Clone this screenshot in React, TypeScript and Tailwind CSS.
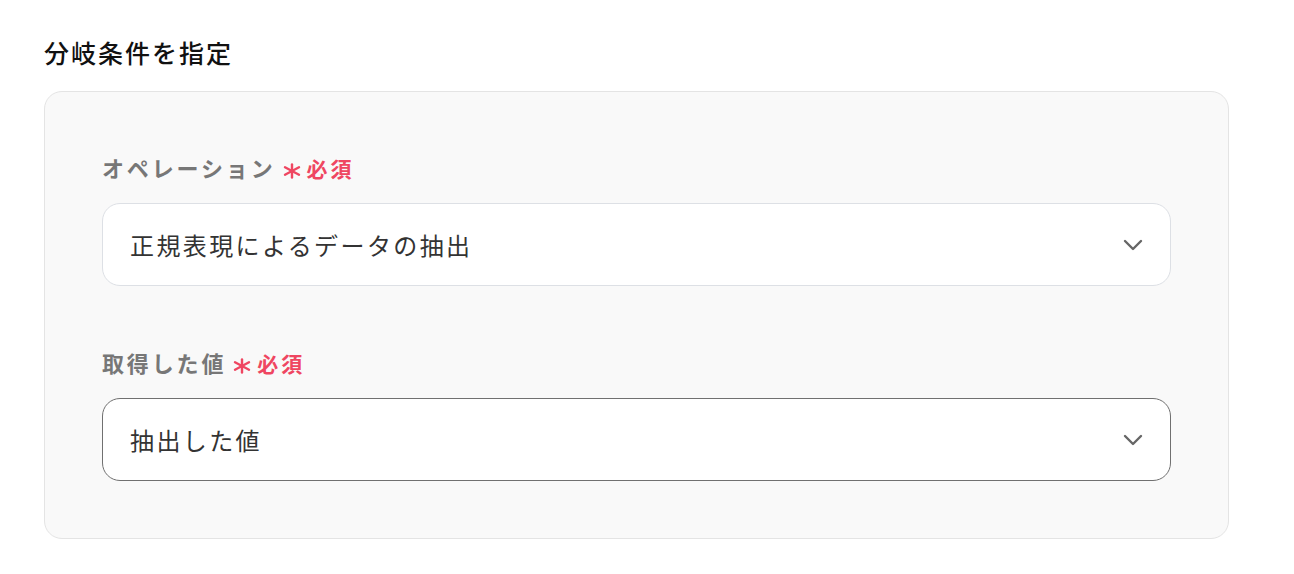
const fields = [
  { label: "オペレーション", value: "正規表現によるデータの抽出", focused: false },
  { label: "取得した値", value: "抽出した値", focused: true },
];

function Asterisk() {
  return (
    <svg viewBox="0 0 18 16" className="h-4 w-[18px] shrink-0" fill="none" stroke="#ef4661" strokeWidth="2.4" strokeLinecap="round">
      <path d="M9 1.5v13" />
      <path d="M2 4.2l14 7.6" />
      <path d="M2 11.8l14-7.6" />
    </svg>
  );
}

function Chevron() {
  return (
    <svg viewBox="0 0 20 12" className="h-3 w-5" fill="none" stroke="#666666" strokeWidth="2.4" strokeLinecap="round" strokeLinejoin="round">
      <path d="M2 2l8 8 8-8" />
    </svg>
  );
}

type FieldProps = {
  label: string;
  value: string;
  focused: boolean;
};

function Field({ label, value, focused }: FieldProps) {
  return (
    <div className="flex flex-col gap-[21px]">
      <div className="flex h-[30px] items-center">
        <span className="text-[22px] font-bold leading-[30px] tracking-[0.13em] text-[#777777]">
          {label}
        </span>
        <span className="ml-[7px] mt-[8px]">
          <Asterisk />
        </span>
        <span className="ml-[6px] mt-[2px] text-[21px] font-bold leading-[30px] tracking-[0.14em] text-[#ef4661]">
          必須
        </span>
      </div>
      <div
        className={`flex h-[83px] items-center justify-between rounded-[18px] border bg-white pl-[27px] pr-[27px] ${
          focused ? "border-[#707070]" : "border-[#dde0e5]"
        }`}
      >
        <span className="text-[24px] leading-[34px] tracking-[0.1em] text-[#333333]">
          {value}
        </span>
        <Chevron />
      </div>
    </div>
  );
}

export default function App() {
  return (
    <div
      className="min-h-[574px] w-[1294px] bg-white pl-[44px] pr-[65px] pt-[33px]"
      style={{ fontFamily: '"Noto Sans CJK JP", "Noto Sans", sans-serif' }}
    >
      <h2 className="text-[25px] font-medium leading-[38px] tracking-[0.08em] text-[#111111]">
        分岐条件を指定
      </h2>
      <div className="mt-[20px] flex flex-col gap-[61px] rounded-[18px] border border-[#e4e4e4] bg-[#f9f9f9] px-[57px] pb-[57px] pt-[60px]">
        {fields.map((f) => (
          <Field key={f.label} label={f.label} value={f.value} focused={f.focused} />
        ))}
      </div>
    </div>
  );
}
